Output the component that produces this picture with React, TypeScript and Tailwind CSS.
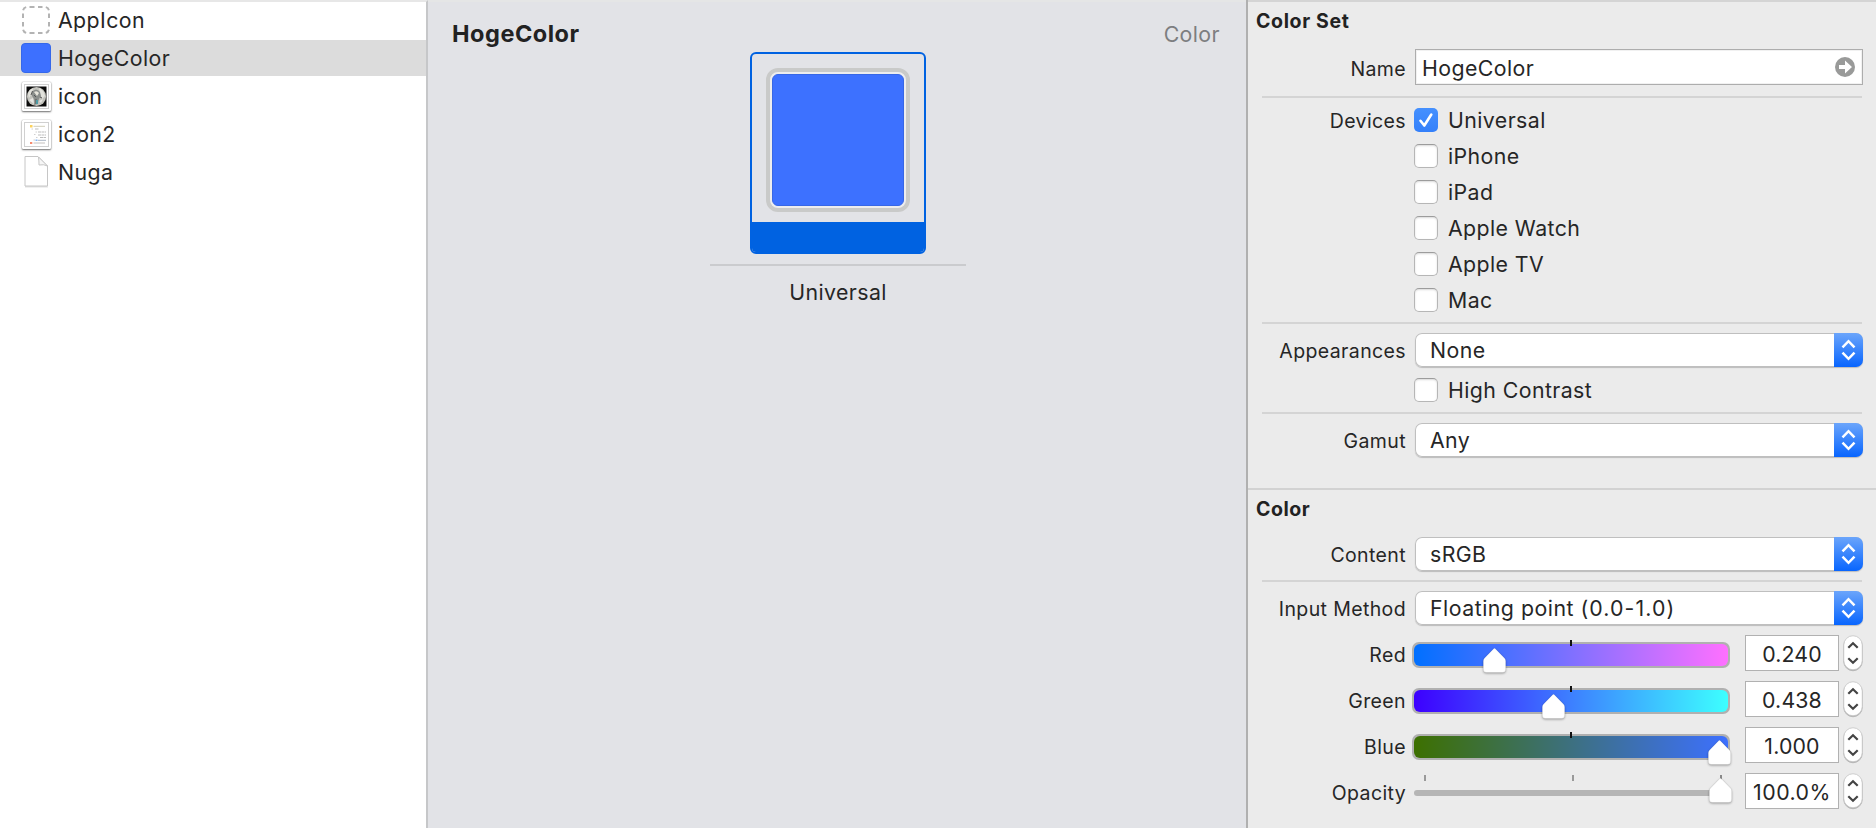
import type { ReactNode } from "react";

function DashedIcon() {
  return (
    <svg width="30" height="30" viewBox="0 0 30 30" fill="none" stroke="#b3b3b3" strokeWidth="2">
      <path d="M8.5 2h5M17 2h4.5M8.5 28h5M17 28h4.5M2 8.5v4.500M2 17v4.500M28 8.500v4.500M28 17v4.500" />
      <path d="M2.100 5.200Q2.700 2.700 5.200 2.100M24.800 2.100Q27.300 2.700 27.900 5.200M2.100 24.800Q2.700 27.300 5.200 27.900M24.800 27.900Q27.300 27.300 27.900 24.800" />
    </svg>
  );
}

function PhotoIcon() {
  return (
    <div className="h-[29px] w-[29px] rounded-[1px] bg-white p-[2px] shadow-[0_1px_2px_rgba(0,0,0,0.55),0_0_1px_rgba(0,0,0,0.5)]">
      <svg width="25" height="25" viewBox="0 0 25 25">
        <rect x="0.500" y="0.500" width="24" height="24" fill="#fff" stroke="#d0d0d0" />
        <rect x="2.500" y="2.500" width="20" height="20" fill="#0b0b0b" />
        <circle cx="12.500" cy="12.500" r="9.600" fill="#c3c3bd" />
        <path d="M4 10Q5 5 9 4.500L8 9L5 14ZM15 4Q20 6 21 12L18 15L16 9Z" fill="#e2e2dc" />
        <path d="M8 8Q12 3 16 8L17 12Q14 15 14 20L10 21Q11 15 8 12Z" fill="#8b8f8c" />
        <path d="M10 8Q13 6 15 9L13 12Z" fill="#e8e6dc" />
        <path d="M5 16L9 14L10 20ZM15 17L19 15L17 19Z" fill="#e6e6e2" />
        <path d="M10 11L12 13M12 15V20M8.500 7L7 11M16 13L18 14" stroke="#555" fill="none" />
        <rect x="12" y="16" width="2" height="4" fill="#4c9aa5" />
      </svg>
    </div>
  );
}

function OutlineIcon() {
  return (
    <div className="h-[29px] w-[29px] rounded-[1px] bg-white p-[2px] shadow-[0_1px_2px_rgba(0,0,0,0.55),0_0_1px_rgba(0,0,0,0.5)]">
      <svg width="25" height="25" viewBox="0 0 25 25">
        <rect x="0.500" y="0.500" width="24" height="24" fill="#fff" stroke="#d0d0d0" />
        <rect x="6" y="3" width="2.500" height="2.500" fill="#fbd25c" />
        <path d="M9.500 4.300H21" stroke="#cfccb8" />
        <path d="M11 7H15M14 10H22M14 13H22M16 15.500H22" stroke="#bdbdbd" strokeWidth="1.200" strokeDasharray="3 0.500" />
        <path d="M7.500 7H9M11.500 10H13M10 12.500H11.500M12 15.500H13.500M9.500 18H11" stroke="#d0d0d0" />
        <rect x="11.500" y="17.500" width="2" height="1.500" fill="#84b5f5" />
        <path d="M14 18.300H22" stroke="#a9b4c4" />
        <rect x="6" y="20" width="2.300" height="2" fill="#f58a70" />
        <path d="M9.500 21H21" stroke="#c4c0bd" />
      </svg>
    </div>
  );
}

function FileIcon() {
  return (
    <svg width="30" height="34" viewBox="0 0 30 34">
      <path d="M4 1.500H17L26.500 11V31H4Z" fill="#fff" stroke="#c6c6c6" strokeLinejoin="round" />
      <path d="M17.500 2Q18 6 18 10Q23 9 26.500 11Z" fill="#f6f6f6" stroke="#c6c6c6" strokeLinejoin="round" />
      <path d="M4 32H27" stroke="#000" strokeOpacity="0.120" />
    </svg>
  );
}

function SidebarRow({ icon, label, selected }: { icon: ReactNode; label: ReactNode; selected?: boolean }) {
  return (
    <div className={`flex h-[36px] items-center pl-[21px] ${selected ? "bg-[#dcdcdc]" : ""}`}>
      <div className="flex h-[30px] w-[30px] items-center justify-center">{icon}</div>
      <div className="pt-[2px] pl-[7px]">{label}</div>
    </div>
  );
}

function Separator() {
  return <div className="ml-[14px] h-[2px] w-[600px] bg-[#d4d4d4]" />;
}

function Label({ children, className = "pt-[4px]" }: { children?: ReactNode; className?: string }) {
  return (
    <div className={`mr-[8px] w-[158px] shrink-0 text-right text-[19.500px] tracking-[0.380px] whitespace-nowrap ${className}`}>
      {children}
    </div>
  );
}

function CheckRow({ label, text, checked }: { label?: ReactNode; text: ReactNode; checked?: boolean }) {
  return (
    <div className="flex h-[24px] items-center">
      <Label>{label}</Label>
      {checked ? (
        <div className="h-[24px] w-[24px] rounded-[5px] bg-[#3b87fd] bg-linear-to-b from-[#4590fe] to-[#3480fa]">
          <svg width="24" height="24" viewBox="0 0 24 24" fill="none" stroke="#fff" strokeWidth="2.600" strokeLinecap="round" strokeLinejoin="round">
            <path d="M6.500 12.800L10.300 17.500L17.300 6.500" />
          </svg>
        </div>
      ) : (
        <div className="h-[24px] w-[24px] rounded-[5px] border border-[#b6b6b6] border-t-[#9c9c9c] bg-white shadow-[inset_0_1px_2px_rgba(0,0,0,0.15)]" />
      )}
      <div className="ml-[10px] pt-[2px]">{text}</div>
    </div>
  );
}

function PopupRow({ label, value }: { label: ReactNode; value: ReactNode }) {
  return (
    <div className="flex h-[34px] items-center">
      <Label>{label}</Label>
      <div className="ml-px flex h-[34px] w-[448px] items-center justify-between overflow-hidden rounded-[7px] bg-white shadow-[0_1px_1px_rgba(0,0,0,0.2),inset_0_0_0_1px_#bfbfbf]">
        <div className="pt-[2px] pl-[15px]">{value}</div>
        <div className="h-[34px] w-[29px] bg-linear-to-b/srgb from-[#6ba5fb] to-[#0865fe]">
          <svg width="29" height="34" viewBox="0 0 29 34" fill="none" stroke="#fff" strokeWidth="2.500">
            <path d="M8.500 14.300L14.500 8.200L20.500 14.300M8.500 19.700L14.500 25.800L20.500 19.700" />
          </svg>
        </div>
      </div>
    </div>
  );
}

function Thumb({ className }: { className: string }) {
  return (
    <svg className={`absolute overflow-visible drop-shadow-[0_1px_1px_rgba(0,0,0,0.35)] ${className}`} width="23" height="25" viewBox="0 0 23 25">
      <path
        d="M10.400 0.900Q11.500 -0.300 12.600 0.900L21.600 10.200Q22.700 11.400 22.700 13V21.200Q22.700 24.500 19.400 24.500H3.600Q0.300 24.500 0.300 21.200V13Q0.300 11.400 1.400 10.200Z"
        fill="#fff"
        stroke="#000"
        strokeOpacity="0.120"
        strokeWidth="0.500"
      />
    </svg>
  );
}

function ValueField({ children, className = "tracking-[0.150px]" }: { children: ReactNode; className?: string }) {
  return (
    <>
      <div className={`flex h-[36px] w-[94px] items-center justify-center border border-[#b1b1b1] bg-white pt-[3px] ${className}`}>
        {children}
      </div>
      <svg className="ml-[4px] overflow-visible drop-shadow-[0_1px_0.500px_rgba(0,0,0,0.25)]" width="20" height="36" viewBox="0 0 20 36" fill="none">
        <rect x="0.750" y="0.750" width="18.500" height="34" rx="9.250" fill="#fff" stroke="#c4c4c4" strokeWidth="0.800" />
        <path d="M5.300 12.800L10 8.300L14.700 12.800M5.300 23.200L10 27.700L14.700 23.200" stroke="#444" strokeWidth="2.200" />
      </svg>
    </>
  );
}

function SliderRow({ label, gradient, thumb, value }: { label: ReactNode; gradient: string; thumb: string; value: ReactNode }) {
  return (
    <div className="flex h-[36px] items-center">
      <Label className="pt-[6px]">{label}</Label>
      <div className="relative -ml-[2px] mt-[4px] mr-[15px] h-[26px] w-[318px] rounded-[7px] bg-[#b0b0b0] p-[2px]">
        <div className={`h-full rounded-[6px] bg-linear-to-r/srgb ${gradient}`} />
        <div className="absolute -top-[2px] left-[158px] h-[6px] w-[2px] bg-[#111]" />
        <Thumb className={`top-[6px] ${thumb}`} />
      </div>
      <ValueField>{value}</ValueField>
    </div>
  );
}

export default function App() {
  return (
    <div className="flex h-[828px] w-[1876px] overflow-hidden bg-[#ebebeb] font-['Inter','Liberation_Sans',sans-serif] text-[21.300px] leading-none tracking-[0.420px] text-[#262626]">
      <aside className="flex w-[428px] shrink-0 flex-col gap-[2px] border-t-2 border-r-2 border-t-[#e7e7e7] border-r-[#c6c7c9] bg-white">
        <SidebarRow icon={<DashedIcon />} label="AppIcon" />
        <SidebarRow
          selected
          icon={<div className="h-[30px] w-[30px] rounded-[4px] border border-[#3568ea] bg-[#3d70ff]" />}
          label="HogeColor"
        />
        <SidebarRow icon={<PhotoIcon />} label="icon" />
        <SidebarRow icon={<OutlineIcon />} label="icon2" />
        <SidebarRow icon={<FileIcon />} label="Nuga" />
      </aside>

      <main className="flex w-[818px] shrink-0 flex-col items-center border-t-2 border-[#e5e6e6] bg-[#e2e3e7]">
        <div className="flex h-[50px] w-full items-center justify-between pr-[26px] pl-[24px] pt-[14px]">
          <h1 className="text-[23.500px] font-bold tracking-[0.520px] text-[#222]">HogeColor</h1>
          <span className="pt-px text-[#7d7e80]">Color</span>
        </div>
        <div className="ml-[2px] h-[202px] w-[176px] overflow-hidden rounded-[6px] border-2 border-[#0062e1]">
          <div className="flex h-[168px] items-center justify-center pt-[4px]">
            <div className="h-[144px] w-[144px] rounded-[12px] border-4 border-[#c9cac9] bg-[#ededef] p-[2px]">
              <div className="h-full w-full rounded-[6px] border border-[#3767e6] bg-[#3d71ff]" />
            </div>
          </div>
          <div className="h-[32px] bg-[#0062e1]" />
        </div>
        <div className="mt-[10px] ml-[2px] h-[2px] w-[256px] bg-[#cacbce]" />
        <div className="mt-[16px] ml-[2px]">Universal</div>
      </main>

      <aside className="w-[630px] shrink-0 border-l-2 border-[#b0b0b0] bg-[#ebebeb]">
        <div className="h-[2px] bg-[#d4d4d4]" />
        <h2 className="h-[47px] pt-[10px] pl-[8px] text-[19.500px] font-bold tracking-[0.650px] text-[#222]">Color Set</h2>
        <div className="flex h-[36px] items-center">
          <Label className="pt-[6px]">Name</Label>
          <div className="ml-px flex h-[36px] w-[448px] items-center justify-between border border-[#adadad] bg-white pr-[7px] pl-[6px] shadow-[inset_0_0_0_1px_#f1f1f1]">
            <span className="pt-[4px]">HogeColor</span>
            <svg width="20" height="20" viewBox="0 0 20 20">
              <circle cx="10" cy="10" r="10" fill="#999a99" />
              <path d="M4 8H10V3.500L17 10L10 16.500V12H4Z" fill="#fff" />
            </svg>
          </div>
        </div>
        <div className="h-[11px]" />
        <Separator />
        <div className="flex flex-col gap-[12px] py-[10px]">
          <CheckRow label="Devices" text="Universal" checked />
          <CheckRow text="iPhone" />
          <CheckRow text="iPad" />
          <CheckRow text="Apple Watch" />
          <CheckRow text="Apple TV" />
          <CheckRow text="Mac" />
        </div>
        <Separator />
        <div className="flex flex-col gap-[11px] pt-[9px] pb-[10px]">
          <PopupRow label="Appearances" value="None" />
          <CheckRow text="High Contrast" />
        </div>
        <Separator />
        <div className="h-[74px] pt-[9px]">
          <PopupRow label="Gamut" value="Any" />
        </div>
        <div className="h-[2px] bg-[#d2d2d2]" />
        <h2 className="h-[47px] pt-[10px] pl-[8px] text-[19.500px] font-bold tracking-[0.500px] text-[#222]">Color</h2>
        <PopupRow label="Content" value="sRGB" />
        <div className="h-[9px]" />
        <Separator />
        <div className="flex flex-col gap-[10px] pt-[9px]">
          <PopupRow
            label="Input Method"
            value={
              <>
                <span className="tracking-[0.500px]">Floating point </span>
                <span className="tracking-[1.100px]">(0.0-1.0)</span>
              </>
            }
          />
          <SliderRow label="Red" gradient="from-[#0070ff] to-[#ff70ff]" thumb="left-[71px]" value="0.240" />
          <SliderRow label="Green" gradient="from-[#3d00ff] to-[#3dffff]" thumb="left-[130px]" value="0.438" />
          <SliderRow label="Blue" gradient="from-[#3d7000] to-[#3d70ff]" thumb="left-[296px]" value="1.000" />
          <div className="flex h-[36px] items-center">
            <Label className="pt-[6px]">Opacity</Label>
            <div className="relative mt-[4px] mr-[15px] h-[6px] w-[316px] rounded-full bg-[#b5b5b5]">
              <div className="absolute -top-[15px] left-[10px] h-[6px] w-[2px] bg-[#999]" />
              <div className="absolute -top-[15px] left-[158px] h-[6px] w-[2px] bg-[#999]" />
              <div className="absolute -top-[15px] left-[306px] h-[6px] w-[2px] bg-[#888]" />
              <Thumb className="-top-[12px] left-[295px]" />
            </div>
            <ValueField className="tracking-[0.500px]">100.0%</ValueField>
          </div>
        </div>
      </aside>
    </div>
  );
}
